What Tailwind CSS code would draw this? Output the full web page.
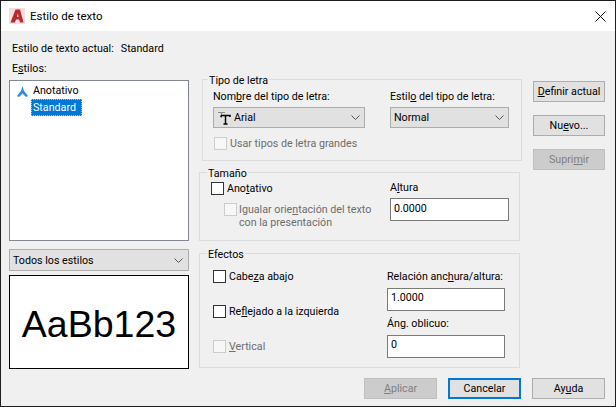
<!DOCTYPE html>
<html lang="es">
<head>
    <meta charset="UTF-8">
    <title>Estilo de texto</title>
    <script src="https://cdn.jsdelivr.net/npm/@tailwindcss/browser@4"></script>
</head>
<body class="bg-[#f0f0f0]">
<div class="w-[616px] h-[407px] flex flex-col overflow-hidden border border-[#1f1f1f] bg-[#f0f0f0] text-[10.7px] leading-[16px] text-black font-['Roboto',sans-serif]">

    <!-- Title bar -->
    <div class="h-[30px] bg-white flex items-center shrink-0">
        <svg class="ml-[8px] w-[16px] h-[16px]" viewBox="0 0 16 16">
            <rect width="16" height="16" fill="#f6dfdd"/>
            <path d="M1.5 14.5 L6.5 1.5 H11 L14.5 14.5 H11 L10.2 11.5 H7 L5.8 14.5 Z M8 9 H9.6 L8.9 5.2 Z" fill="#b8282e" fill-rule="evenodd"/>
        </svg>
        <span class="ml-[5px] text-[11.5px]">Estilo de texto</span>
        <svg class="ml-auto mr-[9px] w-[11px] h-[11px]" viewBox="0 0 11 11">
            <path d="M0.5 0.5 L10.5 10.5 M10.5 0.5 L0.5 10.5" stroke="#111" fill="none"/>
        </svg>
    </div>

    <!-- Main area -->
    <div class="h-[347px] flex pl-[8px] shrink-0">
        <!-- Left column -->
        <div class="w-[180px] shrink-0 flex flex-col">
            <div class="mt-[10px] h-[16px] pl-[3px] flex gap-[7px]"><span>Estilo de texto actual:</span><span>Standard</span></div>
            <div class="mt-[4px] h-[16px] pl-[3px]">E<u>s</u>tilos:</div>
            <div class="mt-[3px] h-[161px] bg-white border border-[#828790] pt-[2px]">
                <div class="flex items-center h-[16px] pl-[7px]">
                    <svg class="w-[11px] h-[11px]" viewBox="0 0 11 11">
                        <path d="M5.5 0 L7 5 L11 10 L9 11 L5.5 7.5 L2 11 L0 10 L4 5 Z" fill="#2b8ae0"/>
                    </svg>
                    <span class="ml-[5px]">Anotativo</span>
                </div>
                <div class="ml-[21px] w-[51px] h-[17px] pl-[2px] leading-[17px] bg-[#0078d7] text-white outline-1 outline-dotted outline-[#9cc9ee] -outline-offset-1">Standard</div>
            </div>
            <div class="mt-[8px] h-[22px] flex items-center justify-between pl-[3px] pr-[5px] pt-[1px] bg-[#e1e1e1] border border-[#adadad]">
                <span>Todos los estilos</span>
                <svg class="w-[9px] h-[5px]" viewBox="0 0 9 5"><path d="M0.5 0.5 L4.5 4.5 L8.5 0.5" stroke="#555" fill="none"/></svg>
            </div>
            <div class="mt-[4px] h-[94px] pt-[4px] bg-white border border-black flex items-center justify-center text-[37.5px] font-['Liberation_Sans',sans-serif]">AaBb123</div>
        </div>

        <!-- Middle column -->
        <div class="w-[323px] ml-[10px] mt-[48px] shrink-0 flex flex-col">
            <!-- Tipo de letra -->
            <div class="relative ml-[3px] w-[320px] h-[82px] border border-[#dcdcdc] pt-[9px] pl-[10px]">
                <span class="absolute -top-[7px] left-[5px] px-[1px] bg-[#f0f0f0]">Tipo de letra</span>
                <div class="flex gap-[25px]">
                    <div class="w-[152px]">
                        <div class="h-[16px]">Nom<u>b</u>re del tipo de letra:</div>
                        <div class="mt-[2px] h-[21px] flex items-center justify-between px-[4px] bg-[#e1e1e1] border border-[#adadad]">
                            <span class="flex items-center gap-[2px]">
                                <svg class="w-[14px] h-[14px]" viewBox="0 0 14 14">
                                    <path d="M0 1.5 H7 M3.5 1.5 V7" stroke="#888" fill="none"/>
                                    <path d="M3 4.5 H12 V6 M7.5 4.5 V13 M5.5 13 H9.5 M3 4.5 V6" stroke="#000" stroke-width="1.5" fill="none"/>
                                </svg>
                                Arial
                            </span>
                            <svg class="w-[9px] h-[5px]" viewBox="0 0 9 5"><path d="M0.5 0.5 L4.5 4.5 L8.5 0.5" stroke="#555" fill="none"/></svg>
                        </div>
                    </div>
                    <div class="w-[119px]">
                        <div class="h-[16px]">Estil<u>o</u> del tipo de letra:</div>
                        <div class="mt-[2px] h-[21px] flex items-center justify-between px-[3px] bg-[#e1e1e1] border border-[#adadad]">
                            <span>Normal</span>
                            <svg class="w-[9px] h-[5px] mr-[1px]" viewBox="0 0 9 5"><path d="M0.5 0.5 L4.5 4.5 L8.5 0.5" stroke="#555" fill="none"/></svg>
                        </div>
                    </div>
                </div>
                <div class="mt-[9px] ml-[1px] flex items-center gap-[3px] h-[13px] text-[#6d6d6d]">
                    <span class="w-[13px] h-[13px] border border-[#cccccc] bg-[#f7f7f7]"></span>
                    <span>Usar tipos de letra grandes</span>
                </div>
            </div>

            <!-- Tamano -->
            <div class="relative mt-[11px] w-[321px] h-[69px] border border-[#dcdcdc] pt-[7px] pl-[11px] flex">
                <span class="absolute -top-[7px] left-[7px] px-[1px] bg-[#f0f0f0]">Tamaño</span>
                <div class="w-[179px] shrink-0 pt-[2px]">
                    <div class="flex items-center gap-[3px] h-[13px]">
                        <span class="w-[13px] h-[13px] border border-[#333333] bg-white"></span>
                        <span>Ano<u>t</u>ativo</span>
                    </div>
                    <div class="mt-[8px] ml-[13px] flex gap-[2px] text-[#6d6d6d] leading-[13px]">
                        <span class="w-[13px] h-[13px] shrink-0 border border-[#cccccc] bg-[#f7f7f7]"></span>
                        <span>Igualar orie<u>n</u>tación del texto<br>con la presentación</span>
                    </div>
                </div>
                <div class="w-[119px]">
                    <div class="h-[16px]">A<u>l</u>tura</div>
                    <div class="mt-[2px] h-[23px] bg-white border border-[#7a7a7a] pl-[3px] leading-[19px]">0.0000</div>
                </div>
            </div>

            <!-- Efectos -->
            <div class="relative mt-[12px] w-[321px] h-[115px] border border-[#dcdcdc] pl-[13px] flex">
                <span class="absolute -top-[7px] left-[7px] px-[1px] bg-[#f0f0f0]">Efectos</span>
                <div class="w-[174px] shrink-0 pt-[16px] flex flex-col gap-[22px]">
                    <div class="flex items-center gap-[3px] h-[13px]">
                        <span class="w-[13px] h-[13px] border border-[#333333] bg-white"></span>
                        <span>Cabe<u>z</u>a abajo</span>
                    </div>
                    <div class="flex items-center gap-[3px] h-[13px]">
                        <span class="w-[13px] h-[13px] border border-[#333333] bg-white"></span>
                        <span>Re<u>f</u>lejado a la izquierda</span>
                    </div>
                    <div class="flex items-center gap-[3px] h-[13px] text-[#6d6d6d]">
                        <span class="w-[13px] h-[13px] border border-[#cccccc] bg-[#f7f7f7]"></span>
                        <span><u>V</u>ertical</span>
                    </div>
                </div>
                <div class="w-[118px] pt-[15px]">
                    <div class="h-[16px]">Relación anc<u>h</u>ura/altura:</div>
                    <div class="mt-[3px] h-[23px] bg-white border border-[#7a7a7a] pl-[3px] leading-[17px]">1.0000</div>
                    <div class="mt-[5px] h-[16px]">Án<u>g</u>. oblicuo:</div>
                    <div class="mt-[3px] h-[23px] bg-white border border-[#7a7a7a] pl-[3px] leading-[17px]">0</div>
                </div>
            </div>
        </div>

        <!-- Right buttons -->
        <div class="w-[72px] ml-[11px] mt-[50px] shrink-0 flex flex-col gap-[13px]">
            <div class="h-[21px] flex items-center justify-center bg-[#e1e1e1] border border-[#adadad]"><span><u>D</u>efinir actual</span></div>
            <div class="h-[21px] flex items-center justify-center bg-[#e1e1e1] border border-[#adadad]"><span>Nu<u>e</u>vo...</span></div>
            <div class="h-[21px] flex items-center justify-center bg-[#cccccc] border border-[#bfbfbf] text-[#7f7f7f]"><span>Supri<u>m</u>ir</span></div>
        </div>
    </div>

    <!-- Bottom buttons -->
    <div class="flex justify-end gap-[11px] pr-[10px]">
        <div class="w-[73px] h-[21px] flex items-center justify-center bg-[#cccccc] border border-[#bfbfbf] text-[#7f7f7f]"><span><u>A</u>plicar</span></div>
        <div class="w-[73px] h-[21px] flex items-center justify-center bg-[#e1e1e1] border-2 border-[#0078d7]"><span>Cancelar</span></div>
        <div class="w-[73px] h-[21px] flex items-center justify-center bg-[#e1e1e1] border border-[#adadad]"><span>Ay<u>u</u>da</span></div>
    </div>
</div>
</body>
</html>
